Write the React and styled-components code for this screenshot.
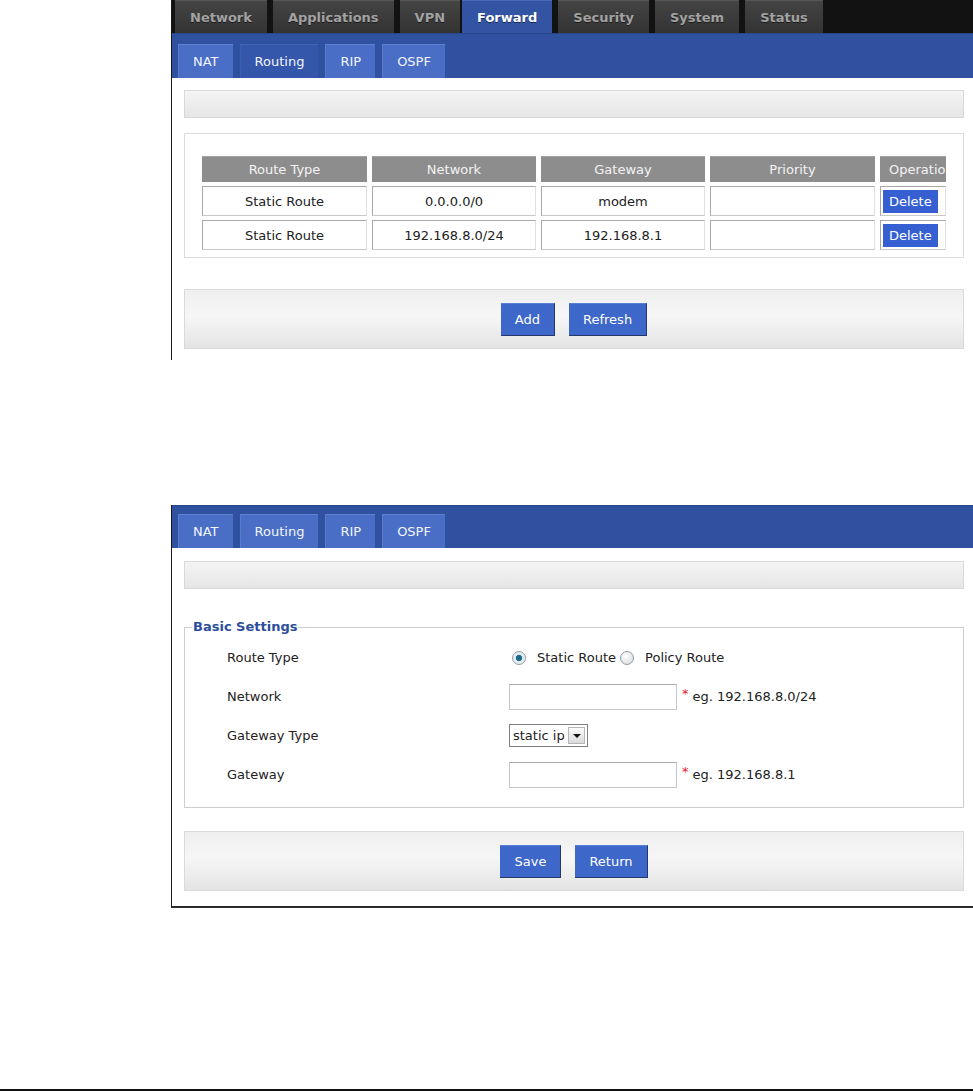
import React from "react";
import styled, { createGlobalStyle } from "styled-components";

const GlobalStyle = createGlobalStyle`
  html, body {
    margin: 0;
    padding: 0;
    background: #fff;
  }
  body {
    font-family: "DejaVu Sans", Verdana, sans-serif;
    font-size: 13px;
    color: #222;
  }
`;

const Page = styled.div`
  width: 973px;
  height: 1092px;
  display: flex;
  flex-direction: column;
  overflow: hidden;
`;

// one screenshot pasted into the document
const Shot = styled.div`
  margin-left: 171px;
  margin-top: ${(p) => p.$top || 0}px;
  border-left: 1px solid #1a1a1a;
  border-bottom: ${(p) => (p.$closed ? "2px solid #2b2b2b" : "none")};
  padding-bottom: ${(p) => p.$bottom}px;
  overflow: hidden;
`;

const TopNav = styled.div`
  display: flex;
  gap: 6px;
  height: 33px;
  padding-left: 3px;
  background: #121212;
`;

const NavTab = styled.div`
  display: flex;
  align-items: center;
  padding: 0 15px;
  margin-left: ${(p) => (p.$active ? "-4px" : "0")};
  font-weight: bold;
  font-size: 13px;
  color: ${(p) => (p.$active ? "#fff" : "#a2a2a2")};
  background: ${(p) =>
    p.$active ? "#3254a2" : "linear-gradient(#444, #333)"};
  border-top: 1px solid ${(p) => (p.$active ? "#4a69b5" : "#565656")};
  text-shadow: 0 1px 0 rgba(0, 0, 0, 0.5);
  box-sizing: border-box;
`;

const SubBar = styled.div`
  display: flex;
  gap: 7px;
  height: ${(p) => p.$h}px;
  padding: ${(p) => p.$pad}px 0 0 6px;
  background: #2f519f;
  border-top: 1px solid #274689;
  box-sizing: border-box;
`;

const SubTab = styled.div`
  display: flex;
  align-items: center;
  padding: 0 14px;
  height: 100%;
  color: #f2f5fc;
  background: ${(p) => (p.$active ? "#3456ab" : "#4a6ec6")};
  border-top: 1px solid ${(p) => (p.$active ? "#4264b6" : "#5f81d2")};
  border-left: 1px solid ${(p) => (p.$active ? "#3c5eb0" : "#5a7cce")};
  box-sizing: border-box;
`;

const Content = styled.div`
  padding: ${(p) => p.$top}px 9px 0 12px;
`;

const InfoBar = styled.div`
  height: 28px;
  border: 1px solid #d9d9d9;
  background: linear-gradient(#f4f4f4, #e6e6e6);
  box-sizing: border-box;
`;

const TableBox = styled.div`
  margin-top: 15px;
  height: 125px;
  padding: 22px 0 0 17px;
  border: 1px solid #dcdcdc;
  box-sizing: border-box;
`;

const RouteGrid = styled.div`
  display: grid;
  grid-template-columns: 165px 164px 164px 165px 66px;
  column-gap: 5px;
  row-gap: 4px;
`;

const HeadCell = styled.div`
  height: 26px;
  display: flex;
  align-items: center;
  justify-content: ${(p) => (p.$left ? "flex-start" : "center")};
  padding-left: ${(p) => (p.$left ? "9px" : "0")};
  background: #8d8d8d;
  color: #f3f3f3;
  border-top: 1px solid #a2a2a2;
  white-space: nowrap;
  overflow: hidden;
  box-sizing: border-box;
`;

const Cell = styled.div`
  height: 30px;
  display: flex;
  align-items: center;
  justify-content: ${(p) => (p.$left ? "flex-start" : "center")};
  padding-left: ${(p) => (p.$left ? "2px" : "0")};
  background: #fff;
  border: 1px solid;
  border-color: #a9a9a9 #e0e0e0 #c9c9c9 #a9a9a9;
  box-sizing: border-box;
`;

const DeleteButton = styled.span`
  display: flex;
  align-items: center;
  height: 23px;
  padding: 0 6px;
  background: #3660d2;
  color: #fff;
`;

const ButtonBar = styled.div`
  margin-top: ${(p) => p.$top}px;
  height: 60px;
  display: flex;
  align-items: center;
  justify-content: center;
  gap: 14px;
  border: 1px solid #dadada;
  background: linear-gradient(#efefef, #f6f6f6 45%, #e4e4e4);
  box-sizing: border-box;
`;

const Button = styled.button`
  height: 33px;
  padding: 0 14px;
  font-family: inherit;
  font-size: 13px;
  color: #fff;
  background: #3d67c9;
  border: none;
  border-top: 1px solid #5a80d6;
  border-right: 1px solid #24386a;
  border-bottom: 1px solid #24386a;
  box-sizing: border-box;
`;

const Fieldset = styled.fieldset`
  margin: 30px 0 0;
  padding: 3px 0 13px 7px;
  border: 1px solid #cdcdcd;
  min-width: 0;
`;

const Legend = styled.legend`
  padding: 0 1px;
  line-height: 16px;
  font-weight: bold;
  color: #2c4e9c;
`;

const FormRow = styled.div`
  display: grid;
  grid-template-columns: 282px 1fr;
  align-items: center;
  height: 39px;
  padding-left: 35px;
`;

const Control = styled.div`
  display: flex;
  align-items: center;
`;

const Radio = styled.input.attrs({ type: "radio", readOnly: true })`
  appearance: none;
  width: 14px;
  height: 14px;
  margin: 0 11px 0 ${(p) => p.$gap}px;
  border-radius: 50%;
  border: 1px solid #8f9ca8;
  background: ${(p) =>
    p.checked
      ? "radial-gradient(circle, #1b6a8c 0 2.8px, #dfe8ee 3.5px, #f6f8fa 100%)"
      : "radial-gradient(circle at 40% 35%, #ffffff, #d3d6d9)"};
  box-sizing: border-box;
`;

const TextInput = styled.input.attrs({ type: "text" })`
  width: 168px;
  height: 26px;
  margin: 0;
  border: 1px solid #c6c6c6;
  border-top-color: #a8a8a8;
  box-sizing: border-box;
`;

const Required = styled.span`
  margin-left: 5px;
  color: #e3212b;
  position: relative;
  top: -3px;
`;

const Hint = styled.span`
  margin-left: 4px;
`;

const SelectBox = styled.div`
  width: 79px;
  height: 23px;
  display: flex;
  align-items: center;
  justify-content: space-between;
  padding: 0 2px 0 3px;
  border: 1px solid #7f7f7f;
  box-sizing: border-box;
`;

const SelectArrow = styled.span`
  width: 17px;
  height: 17px;
  display: flex;
  align-items: center;
  justify-content: center;
  border: 1px solid #b5b5b5;
  background: linear-gradient(#fbfbfb, #dadada);
  box-sizing: border-box;

  &::after {
    content: "";
    border-left: 4px solid transparent;
    border-right: 4px solid transparent;
    border-top: 4px solid #111;
    margin-top: 1px;
  }
`;

const PageRule = styled.div`
  margin-top: auto;
  margin-bottom: 1px;
  height: 2px;
  background: #111;
`;

const navTabs = ["Network", "Applications", "VPN", "Forward", "Security", "System", "Status"];
const subTabs = ["NAT", "Routing", "RIP", "OSPF"];

const routes = [
  { type: "Static Route", network: "0.0.0.0/0", gateway: "modem", priority: "" },
  { type: "Static Route", network: "192.168.8.0/24", gateway: "192.168.8.1", priority: "" },
];

const SubNav = ({ active, h, pad }) => (
  <SubBar $h={h} $pad={pad}>
    {subTabs.map((t) => (
      <SubTab key={t} $active={t === active}>
        {t}
      </SubTab>
    ))}
  </SubBar>
);

const App = () => {
  return (
    <Page>
      <GlobalStyle />

      <Shot $bottom={11}>
        <TopNav>
          {navTabs.map((t) => (
            <NavTab key={t} $active={t === "Forward"}>
              {t}
            </NavTab>
          ))}
        </TopNav>
        <SubNav active="Routing" h={45} pad={10} />
        <Content $top={12}>
          <InfoBar />
          <TableBox>
            <RouteGrid>
              <HeadCell>Route Type</HeadCell>
              <HeadCell>Network</HeadCell>
              <HeadCell>Gateway</HeadCell>
              <HeadCell>Priority</HeadCell>
              <HeadCell $left>Operation</HeadCell>
              {routes.map((r, i) => (
                <React.Fragment key={i}>
                  <Cell>{r.type}</Cell>
                  <Cell>{r.network}</Cell>
                  <Cell>{r.gateway}</Cell>
                  <Cell>{r.priority}</Cell>
                  <Cell $left>
                    <DeleteButton>Delete</DeleteButton>
                  </Cell>
                </React.Fragment>
              ))}
            </RouteGrid>
          </TableBox>
          <ButtonBar $top={31}>
            <Button>Add</Button>
            <Button>Refresh</Button>
          </ButtonBar>
        </Content>
      </Shot>

      <Shot $top={145} $bottom={15} $closed>
        <SubNav h={43} pad={8} />
        <Content $top={13}>
          <InfoBar />
          <Fieldset>
            <Legend>Basic Settings</Legend>
            <FormRow>
              <span>Route Type</span>
              <Control>
                <Radio name="rt" checked $gap={3} />
                <span>Static Route</span>
                <Radio name="rt" checked={false} $gap={4} />
                <span>Policy Route</span>
              </Control>
            </FormRow>
            <FormRow>
              <span>Network</span>
              <Control>
                <TextInput />
                <Required>*</Required>
                <Hint>eg. 192.168.8.0/24</Hint>
              </Control>
            </FormRow>
            <FormRow>
              <span>Gateway Type</span>
              <Control>
                <SelectBox>
                  <span>static ip</span>
                  <SelectArrow />
                </SelectBox>
              </Control>
            </FormRow>
            <FormRow>
              <span>Gateway</span>
              <Control>
                <TextInput />
                <Required>*</Required>
                <Hint>eg. 192.168.8.1</Hint>
              </Control>
            </FormRow>
          </Fieldset>
          <ButtonBar $top={23}>
            <Button>Save</Button>
            <Button>Return</Button>
          </ButtonBar>
        </Content>
      </Shot>

      <PageRule />
    </Page>
  );
};

export default App;
